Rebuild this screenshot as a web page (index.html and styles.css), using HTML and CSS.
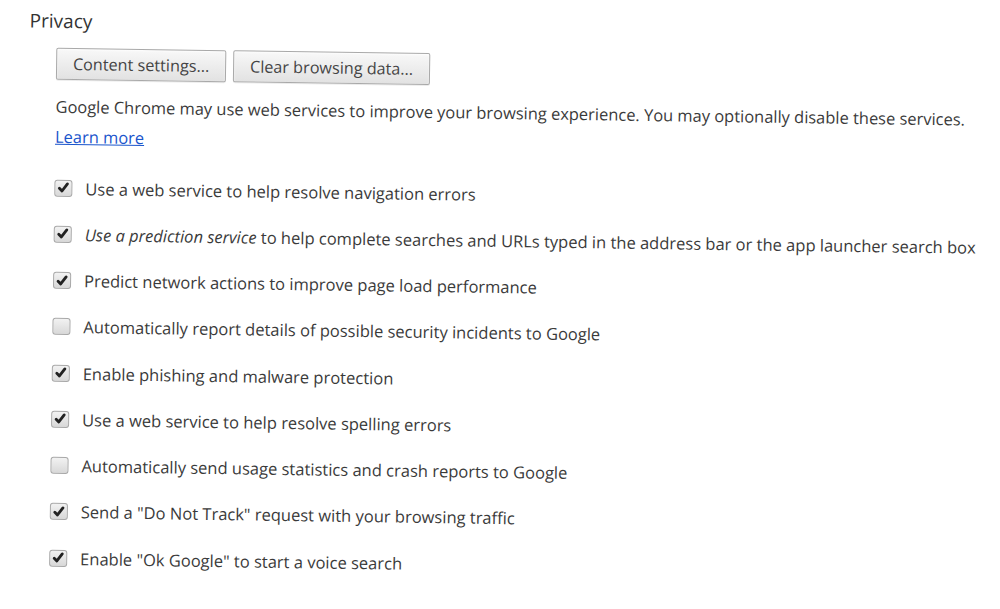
FILE: index.html
```html
<!DOCTYPE html>
<html>
<head>
<meta charset="utf-8">
<link rel="stylesheet" href="styles.css">
</head>
<body>
<div class="page">
  <h2 class="title">Privacy</h2>
  <div class="buttons">
    <button class="btn btn-content">Content settings...</button>
    <button class="btn btn-clear">Clear browsing data...</button>
  </div>
  <p class="desc">Google Chrome may use web services to improve your browsing experience. You may optionally disable these services.</p>
  <a class="learn" href="#">Learn more</a>
  <ul class="opts">
    <li class="opt"><span class="cb on"><svg viewBox="0 0 18 18"><path d="M4.5 9.5 L7.5 12.5 L13.5 4.5"/></svg></span><span class="lbl">Use a web service to help resolve navigation errors</span></li>
    <li class="opt"><span class="cb on"><svg viewBox="0 0 18 18"><path d="M4.5 9.5 L7.5 12.5 L13.5 4.5"/></svg></span><span class="lbl"><em>Use a prediction service</em> to help complete searches and URLs typed in the address bar or the app launcher search box</span></li>
    <li class="opt"><span class="cb on"><svg viewBox="0 0 18 18"><path d="M4.5 9.5 L7.5 12.5 L13.5 4.5"/></svg></span><span class="lbl">Predict network actions to improve page load performance</span></li>
    <li class="opt"><span class="cb"></span><span class="lbl">Automatically report details of possible security incidents to Google</span></li>
    <li class="opt"><span class="cb on"><svg viewBox="0 0 18 18"><path d="M4.5 9.5 L7.5 12.5 L13.5 4.5"/></svg></span><span class="lbl">Enable phishing and malware protection</span></li>
    <li class="opt"><span class="cb on"><svg viewBox="0 0 18 18"><path d="M4.5 9.5 L7.5 12.5 L13.5 4.5"/></svg></span><span class="lbl">Use a web service to help resolve spelling errors</span></li>
    <li class="opt"><span class="cb"></span><span class="lbl">Automatically send usage statistics and crash reports to Google</span></li>
    <li class="opt"><span class="cb on"><svg viewBox="0 0 18 18"><path d="M4.5 9.5 L7.5 12.5 L13.5 4.5"/></svg></span><span class="lbl">Send a "Do Not Track" request with your browsing traffic</span></li>
    <li class="opt"><span class="cb on"><svg viewBox="0 0 18 18"><path d="M4.5 9.5 L7.5 12.5 L13.5 4.5"/></svg></span><span class="lbl">Enable "Ok Google" to start a voice search</span></li>
  </ul>
</div>
</body>
</html>
```

FILE: styles.css
```css
html, body {
  margin: 0;
  padding: 0;
  background: #ffffff;
  overflow: hidden;
}
body {
  font-family: "Open Sans", "Noto Sans", sans-serif;
  color: #3a3a3a;
  width: 1000px;
  height: 609px;
}
.page {
  padding: 0 0 0 30px;
  transform: rotate(0.8deg);
  transform-origin: 0 0;
}
.title {
  margin: 0;
  padding-top: 7px;
  font-size: 19px;
  font-weight: 400;
  line-height: 26px;
  color: #333;
}
.buttons {
  display: flex;
  gap: 7px;
  margin: 14px 0 0 27px;
}
.btn {
  font-family: inherit;
  font-size: 16.2px;
  color: #444;
  height: 32px;
  padding: 0;
  border: 1px solid #a9a9a9;
  border-radius: 2px;
  background: linear-gradient(#f8f8f8, #e2e2e2);
  box-shadow: 0 1px 0 rgba(0,0,0,0.08), inset 0 1px 2px rgba(255,255,255,0.8);
}
.btn-content { width: 170px; }
.btn-clear { width: 197px; }
.desc {
  margin: 16px 0 0 27px;
  font-size: 16.45px;
  line-height: 22px;
  white-space: nowrap;
}
.learn {
  display: block;
  margin: 8px 0 0 27px;
  font-size: 16.45px;
  line-height: 22px;
  color: #1a55cc;
  text-decoration: underline;
  width: max-content;
}
.opts {
  list-style: none;
  margin: 17px 0 0 27px;
  padding: 0;
}
.opt {
  display: flex;
  align-items: center;
  height: 46.25px;
  font-size: 16.5px;
  white-space: nowrap;
}
.cb {
  flex: none;
  box-sizing: border-box;
  width: 18px;
  height: 17px;
  border: 1px solid #a8a8a8;
  border-radius: 3px;
  background: linear-gradient(#f2f2f2, #d8d8d8);
  margin-right: 13px;
  display: flex;
  align-items: center;
  justify-content: center;
}
.cb svg {
  width: 16px;
  height: 16px;
}
.cb svg path {
  fill: none;
  stroke: #222;
  stroke-width: 3.2;
  stroke-linecap: round;
  stroke-linejoin: round;
}
.lbl em {
  font-style: italic;
}
```
